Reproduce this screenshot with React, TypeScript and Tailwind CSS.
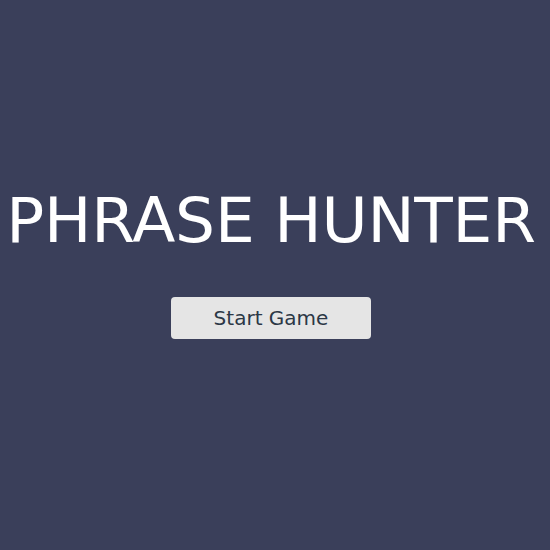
export default function App() {
	return (
		<div className="flex h-[550px] w-[550px] flex-col items-center bg-[#3a3f5a] pr-[8px] pt-[177px] font-['DejaVu_Sans',sans-serif]">
			<h1 className="whitespace-nowrap text-[63px] leading-[88px] font-normal tracking-[-0.2px] text-white">
				PHRASE HUNTER
			</h1>
			<button className="mt-[32px] h-[42px] w-[200px] rounded-[4px] bg-[#e5e5e5] text-[20px] text-[#2c3846]">
				Start Game
			</button>
		</div>
	);
}
